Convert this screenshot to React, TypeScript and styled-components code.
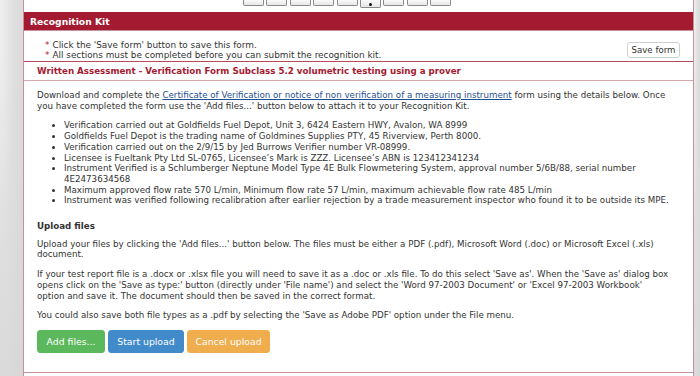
import React from "react";
import styled, { createGlobalStyle } from "styled-components";

const Global = createGlobalStyle`
  html, body { margin: 0; padding: 0; background: #dcdcdc; }
  body { font-family: "DejaVu Sans", Verdana, sans-serif; color: #333; }
`;

const Page = styled.div`
  display: flex;
  width: 700px;
  height: 376px;
  overflow: hidden;
  background: linear-gradient(180deg, #e4e4e4 0%, #d8d8d8 60%, #d4d4d4 100%);
`;

const Gutter = styled.div<{ $w: number }>`
  width: ${(p) => p.$w}px;
  flex: none;
  background: radial-gradient(ellipse at 0% 8%, #f0f0f0 0%, #dedede 45%, #d6d6d6 100%);
`;

const Panel = styled.div`
  width: 669px;
  flex: none;
  background: #fff;
  border-left: 1px solid #c8909b;
  border-right: 1px solid #c8909b;
  display: flex;
  flex-direction: column;
`;

const TopStrip = styled.div`
  height: 12px;
  display: flex;
  gap: 2.4px;
  padding-left: 219px;
  align-items: flex-start;
`;

const StepBox = styled.div<{ $active?: boolean }>`
  width: 19px;
  height: ${(p) => (p.$active ? 7 : 5)}px;
  border: 1px solid #8a8a8a;
  border-top: none;
  border-radius: 0 0 2px 2px;
  background: linear-gradient(#fafafa, #e6e6e6);
  display: flex;
  justify-content: center;
  align-items: flex-end;
`;

const Dot = styled.span`
  width: 3px;
  height: 3px;
  border-radius: 50%;
  background: #111;
  margin-bottom: 1px;
`;

const HeaderBar = styled.div`
  height: 18px;
  background: #a41a31;
  color: #fff;
  font-weight: bold;
  font-size: 9.2px;
  display: flex;
  align-items: center;
  padding-left: 6px;
  border-bottom: 1px solid #c8909b;
`;

const Notes = styled.div`
  display: flex;
  align-items: center;
  justify-content: space-between;
  padding: 9px 13px 1px 21px;
  border-bottom: 1px solid #b54b5e;
`;

const NoteList = styled.div`
  display: flex;
  flex-direction: column;
  font-size: 8.9px;
  line-height: 10px;
  color: #333;
`;

const Star = styled.span`
  color: #b01c30;
  margin-right: 3px;
`;

const SaveButton = styled.button`
  font-family: "DejaVu Sans", Verdana, sans-serif;
  font-size: 8.6px;
  color: #333;
  background: #fff;
  border: 1px solid #d0d0d0;
  border-radius: 3px;
  height: 16px;
  width: 53px;
  padding: 0;
  white-space: nowrap;
`;

const Title = styled.div`
  font-size: 8.7px;
  font-weight: bold;
  color: #a41a31;
  padding: 0 13px;
  height: 18px;
  display: flex;
  align-items: center;
  border-bottom: 1px solid #d9a6ae;
`;

const Body = styled.div`
  padding: 9px 13px 0 13px;
  font-size: 8.7px;
  line-height: 10.7px;
  color: #333;
  flex: 1;
  border-bottom: 1px solid #c8909b;
`;

const Para = styled.p<{ $mb?: number }>`
  margin: 0 0 ${(p) => p.$mb ?? 9}px 0;
`;

const Link = styled.a`
  color: #1f4f8f;
  text-decoration: underline;
`;

const List = styled.ul`
  margin: 0 0 15px 0;
  padding-left: 27px;
`;

const Heading = styled.div`
  font-weight: bold;
  margin-bottom: 7px;
`;

const ButtonRow = styled.div`
  display: flex;
  gap: 3px;
  margin-top: 1px;
`;

const ActionButton = styled.button<{ $bg: string; $w: number }>`
  font-family: "DejaVu Sans", Verdana, sans-serif;
  font-size: 9.3px;
  color: #fff;
  background: ${(p) => p.$bg};
  border: 1px solid ${(p) => p.$bg};
  border-radius: 3px;
  height: 23px;
  width: ${(p) => p.$w}px;
  padding: 0;
`;

const bullets = [
  "Verification carried out at Goldfields Fuel Depot, Unit 3, 6424 Eastern HWY, Avalon, WA 8999",
  "Goldfields Fuel Depot is the trading name of Goldmines Supplies PTY, 45 Riverview, Perth 8000.",
  "Verification carried out on the 2/9/15 by Jed Burrows Verifier number VR-08999.",
  "Licensee is Fueltank Pty Ltd SL-0765, Licensee’s Mark is ZZZ. Licensee’s ABN is 123412341234",
  "Instrument Verified is a Schlumberger Neptune Model Type 4E Bulk Flowmetering System, approval number 5/6B/88, serial number 4E2473634568",
  "Maximum approved flow rate 570 L/min, Minimum flow rate 57 L/min, maximum achievable flow rate 485 L/min",
  "Instrument was verified following recalibration after earlier rejection by a trade measurement inspector who found it to be outside its MPE.",
];

export default function App() {
  return (
    <>
      <Global />
      <Page>
        <Gutter $w={23} />
        <Panel>
          <TopStrip>
            {Array.from({ length: 9 }).map((_, i) => (
              <StepBox key={i} $active={i === 5}>
                {i === 5 && <Dot />}
              </StepBox>
            ))}
          </TopStrip>
          <HeaderBar>Recognition Kit</HeaderBar>
          <Notes>
            <NoteList>
              <div>
                <Star>*</Star>Click the 'Save form' button to save this form.
              </div>
              <div>
                <Star>*</Star>All sections must be completed before you can submit the recognition kit.
              </div>
            </NoteList>
            <SaveButton>Save form</SaveButton>
          </Notes>
          <Title>Written Assessment - Verification Form Subclass 5.2 volumetric testing using a prover</Title>
          <Body>
            <Para>
              Download and complete the{" "}
              <Link href="#">Certificate of Verification or notice of non verification of a measuring instrument</Link>{" "}
              form using the details below. Once you have completed the form use the 'Add files...' button below to
              attach it to your Recognition Kit.
            </Para>
            <List>
              {bullets.map((b) => (
                <li key={b}>{b}</li>
              ))}
            </List>
            <Heading>Upload files</Heading>
            <Para>
              Upload your files by clicking the 'Add files...' button below. The files must be either a PDF (.pdf),
              Microsoft Word (.doc) or Microsoft Excel (.xls) document.
            </Para>
            <Para>
              If your test report file is a .docx or .xlsx file you will need to save it as a .doc or .xls file. To do
              this select 'Save as'. When the 'Save as' dialog box opens click on the 'Save as type:' button (directly
              under 'File name') and select the 'Word 97-2003 Document' or 'Excel 97-2003 Workbook'
              <br />
              option and save it. The document should then be saved in the correct format.
            </Para>
            <Para>You could also save both file types as a .pdf by selecting the 'Save as Adobe PDF' option under the File menu.</Para>
            <ButtonRow>
              <ActionButton $bg="#5cb85c" $w={68}>Add files...</ActionButton>
              <ActionButton $bg="#428bca" $w={76}>Start upload</ActionButton>
              <ActionButton $bg="#f0ad4e" $w={83}>Cancel upload</ActionButton>
            </ButtonRow>
          </Body>
          <div style={{ height: 3 }} />
        </Panel>
        <Gutter $w={6} />
      </Page>
    </>
  );
}
